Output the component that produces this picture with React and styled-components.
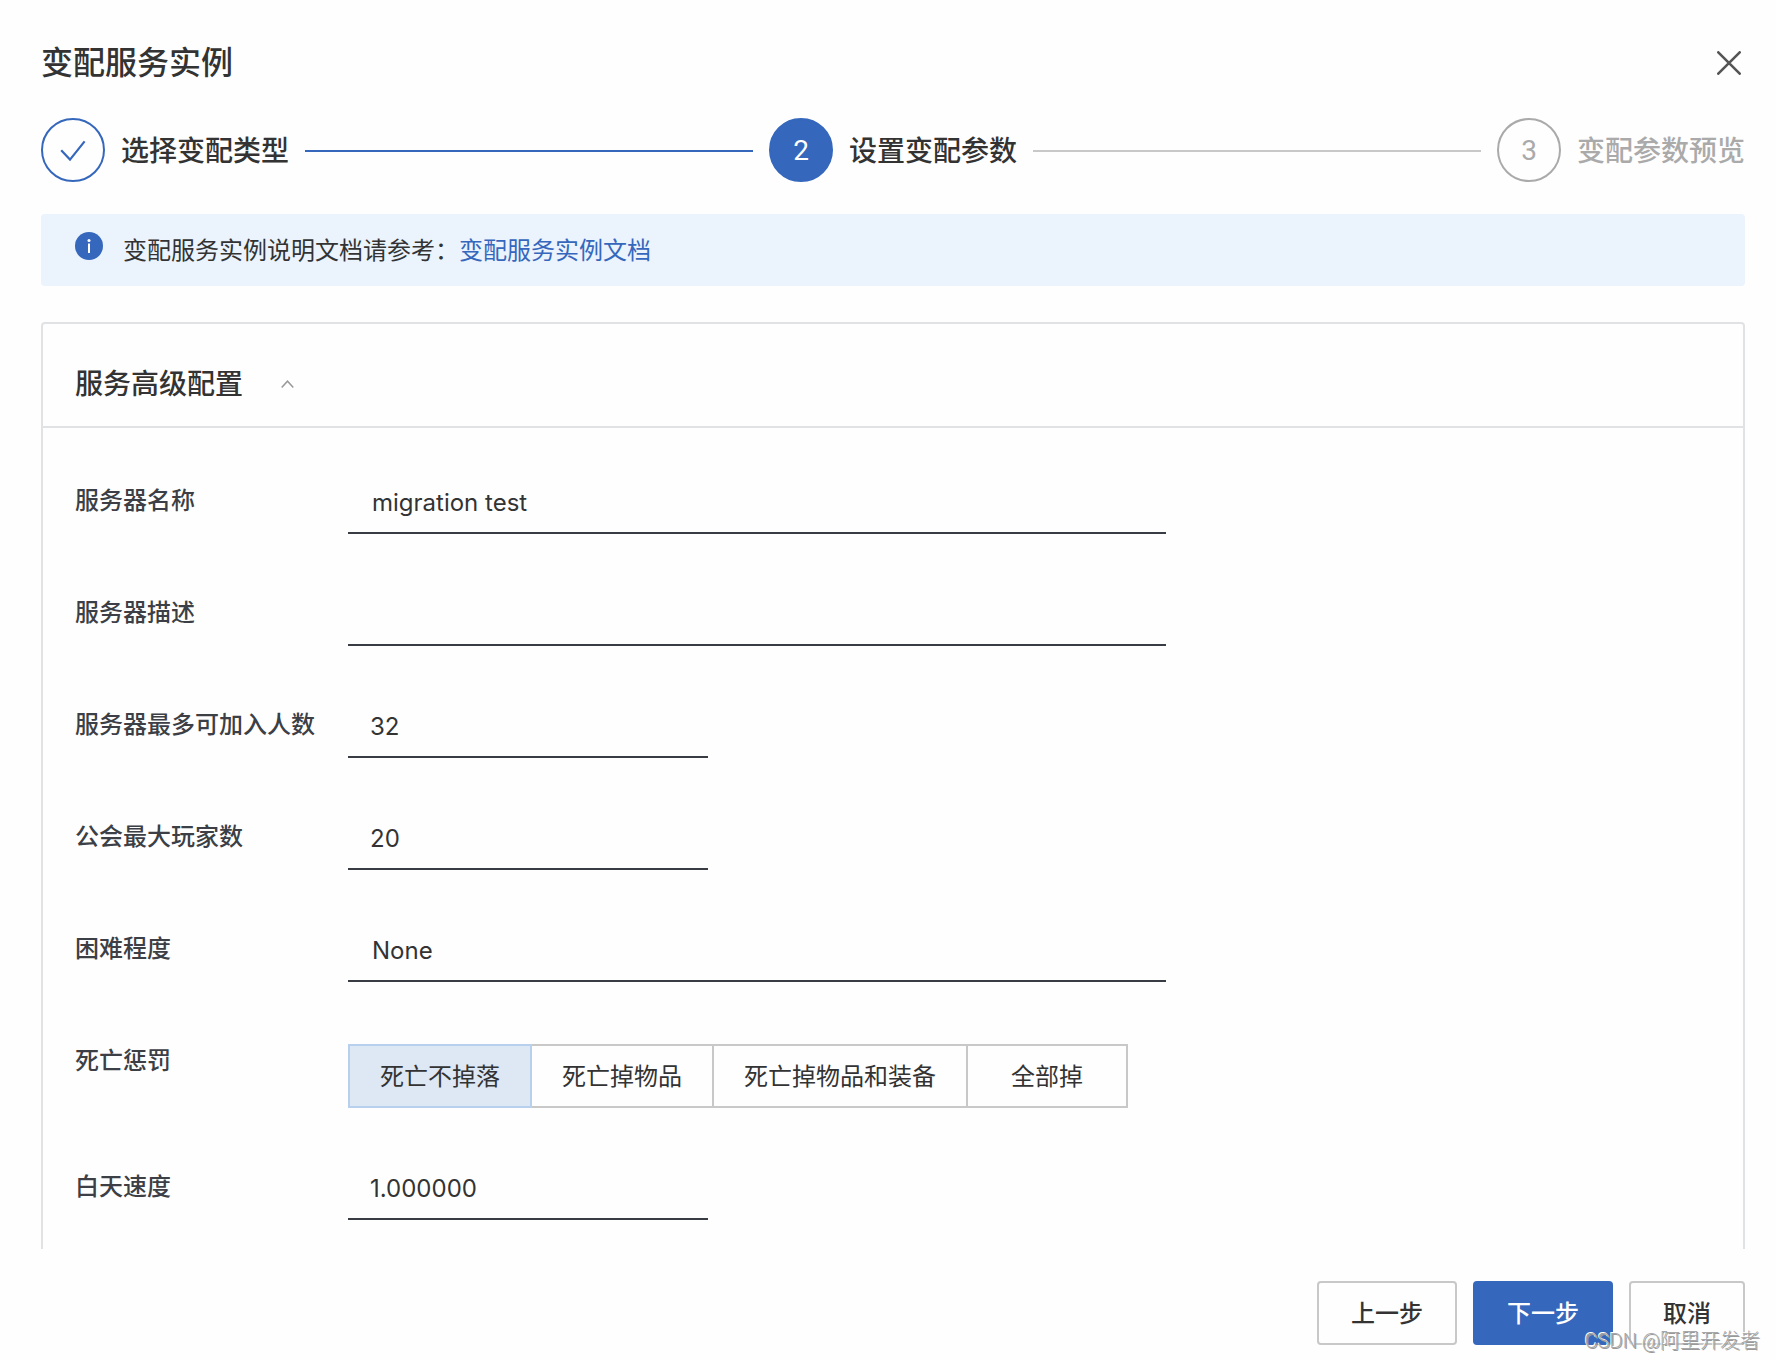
import React, { useState } from "react";
import styled, { createGlobalStyle, css } from "styled-components";

const BLUE = "#3567bc";

const GlobalStyle = createGlobalStyle`
  * {
    box-sizing: border-box;
  }

  body {
    margin: 0;
    background-color: #fefefe;
    color: #333333;
    font-family: Inter, "Noto Sans CJK SC", sans-serif;
    font-size: 24px;
  }

  button,
  input {
    font-family: inherit;
    font-size: inherit;
    color: inherit;
  }
`;

const PageContainer = styled.div`
  position: relative;
  height: 100vh;
  display: flex;
  flex-direction: column;
  padding: 39px 31px 15px 41px;
`;

const TitleContainer = styled.header`
  display: flex;
  align-items: center;
  justify-content: space-between;
  height: 48px;
  margin-bottom: 31px;
`;

const Title = styled.h1`
  margin: 0;
  font-size: 32px;
  line-height: 48px;
  font-weight: 500;
`;

const CloseButton = styled.button`
  display: flex;
  padding: 4px;
  background: none;
  border: none;
  cursor: pointer;
`;

const StepList = styled.ol`
  display: flex;
  align-items: center;
  gap: 16px;
  margin: 0 0 32px;
  padding: 0;
  list-style: none;
`;

const StepItem = styled.li`
  display: flex;
  align-items: center;
  gap: 16px;
  font-size: 28px;
  line-height: 40px;
  font-weight: 500;
  white-space: nowrap;
  color: ${(props) => (props.$state === "wait" ? "#aaaaaa" : "#333333")};
`;

const StepCircle = styled.span`
  display: flex;
  align-items: center;
  justify-content: center;
  width: 64px;
  height: 64px;
  padding-top: 2px;
  border: 2px solid ${(props) => (props.$state === "wait" ? "#aaaaaa" : BLUE)};
  border-radius: 50%;
  background-color: ${(props) => (props.$state === "active" ? BLUE : "transparent")};
  color: ${(props) => (props.$state === "active" ? "#ffffff" : "#aaaaaa")};
  font-family: Roboto, sans-serif;
  font-weight: 400;
`;

const StepText = styled.span`
  padding-top: 2px;
`;

const StepLine = styled.li`
  flex: 1;
  height: 2px;
  margin-top: 2px;
  background-color: ${(props) => (props.$done ? BLUE : "#c8c8c8")};
`;

const Content = styled.main`
  flex: 1;
  min-height: 0;
  overflow-y: auto;
  scrollbar-width: none;
`;

const Notice = styled.div`
  display: flex;
  gap: 20px;
  margin-bottom: 36px;
  padding: 18px 34px 16px;
  border-radius: 4px;
  background-color: #ebf3fd;
  line-height: 38px;

  svg {
    flex: none;
  }
`;

const NoticeLink = styled.a`
  color: ${BLUE};
  text-decoration: none;
`;

const Panel = styled.section`
  border: 2px solid #e1e2e3;
  border-radius: 4px;
`;

const PanelHeader = styled.div`
  display: flex;
  align-items: center;
  gap: 34px;
  padding: 41px 32px 23px;
  border-bottom: 2px solid #e1e2e3;
`;

const PanelTitle = styled.h2`
  margin: 0;
  font-size: 28px;
  line-height: 38px;
  font-weight: 500;
`;

const FoldButton = styled.button`
  display: flex;
  padding: 4px;
  background: none;
  border: none;
  cursor: pointer;
`;

const Form = styled.form`
  display: flex;
  flex-direction: column;
  gap: 48px;
  padding: 42px 32px 48px;
`;

const Row = styled.div`
  display: grid;
  grid-template-columns: 273px 1fr;
`;

const labelText = css`
  color: #3c3f45;
  font-weight: 500;
  line-height: 62px;
`;

const Label = styled.label`
  ${labelText}
`;

const GroupLabel = styled.span`
  ${labelText}
`;

const TextInput = styled.input`
  width: ${(props) => (props.$short ? "360px" : "60%")};
  height: 64px;
  padding: 2px ${(props) => (props.$short ? "22px" : "24px")} 0;
  border: none;
  border-bottom: 2px solid #393c42;
  outline: none;
  background: none;
`;

const RadioGroup = styled.div`
  display: flex;
  margin-top: 14px;
`;

const RadioInput = styled.input`
  position: absolute;
  opacity: 0;
`;

const RadioButton = styled.label`
  position: relative;
  min-width: 162px;
  height: 64px;
  padding: 0 30px;
  border: 2px solid #c8c8c8;
  line-height: 62px;
  text-align: center;
  cursor: pointer;

  & + & {
    margin-left: -2px;
  }

  &:has(input:checked) {
    z-index: 1;
    border-color: #b7d0ed;
    background-color: #dde8f4;
  }
`;

const Footer = styled.footer`
  display: flex;
  justify-content: flex-end;
  gap: 16px;
  padding-top: 32px;
`;

const FooterButton = styled.button`
  height: 64px;
  padding: 2px 32px 0;
  border: 2px solid ${(props) => (props.$primary ? BLUE : "#c8c8c8")};
  border-radius: 4px;
  background-color: ${(props) => (props.$primary ? BLUE : "#fefefe")};
  color: ${(props) => (props.$primary ? "#ffffff" : "#333333")};
  font-weight: 500;
  line-height: 58px;
  cursor: pointer;
`;

const Watermark = styled.span`
  position: absolute;
  right: 16px;
  bottom: 4px;
  color: #a8a8a8;
  font-family: "Liberation Sans Narrow", Roboto, "Noto Sans CJK SC", sans-serif;
  font-size: 20px;
  font-weight: 300;
  line-height: 30px;
  text-shadow: -1px -1px 0 #ffffff, 1px 1px 0 #999999;
  pointer-events: none;
`;

const fields = [
  { id: "serverName", label: "服务器名称", value: "migration test" },
  { id: "serverDesc", label: "服务器描述", value: "" },
  { id: "maxPlayers", label: "服务器最多可加入人数", value: "32", short: true },
  { id: "guildMax", label: "公会最大玩家数", value: "20", short: true },
  { id: "difficulty", label: "困难程度", value: "None" },
];

const penalties = ["死亡不掉落", "死亡掉物品", "死亡掉物品和装备", "全部掉"];

function CloseIcon() {
  return (
    <svg width="24" height="24" viewBox="0 0 24 24" stroke="#555555" strokeWidth="2.6" strokeLinecap="round">
      <path d="M1.3 1.3L22.7 22.7M22.7 1.3L1.3 22.7" />
    </svg>
  );
}

function CheckIcon() {
  return (
    <svg width="26" height="22" viewBox="0 0 26 22" fill="none" stroke={BLUE} strokeWidth="2.2">
      <path d="M1.2 10.2L10 19.6L24.6 1.4" />
    </svg>
  );
}

function InfoIcon() {
  return (
    <svg width="28" height="28" viewBox="0 0 28 28">
      <circle cx="14" cy="14" r="14" fill={BLUE} />
      <circle cx="14" cy="8.5" r="1.5" fill="#ffffff" />
      <path d="M14 11.5V21" stroke="#ffffff" strokeWidth="2" />
    </svg>
  );
}

function FoldIcon() {
  return (
    <svg width="13" height="8" viewBox="0 0 13 8" fill="none" stroke="#999999" strokeWidth="1.5">
      <path d="M0.7 7.4L6.5 1.2L12.3 7.4" />
    </svg>
  );
}

function Field({ id, label, value, short }) {
  return (
    <Row>
      <Label htmlFor={id}>{label}</Label>
      <TextInput id={id} type="text" defaultValue={value} $short={short} />
    </Row>
  );
}

function App() {
  const [penalty, setPenalty] = useState(penalties[0]);

  return (
    <PageContainer>
      <GlobalStyle />
      <TitleContainer>
        <Title>变配服务实例</Title>
        <CloseButton type="button" aria-label="关闭">
          <CloseIcon />
        </CloseButton>
      </TitleContainer>

      <StepList>
        <StepItem $state="done">
          <StepCircle $state="done">
            <CheckIcon />
          </StepCircle>
          <StepText>选择变配类型</StepText>
        </StepItem>
        <StepLine $done aria-hidden="true" />
        <StepItem $state="active" aria-current="step">
          <StepCircle $state="active">2</StepCircle>
          <StepText>设置变配参数</StepText>
        </StepItem>
        <StepLine aria-hidden="true" />
        <StepItem $state="wait">
          <StepCircle $state="wait">3</StepCircle>
          <StepText>变配参数预览</StepText>
        </StepItem>
      </StepList>

      <Content>
        <Notice>
          <InfoIcon />
          <span>
            变配服务实例说明文档请参考：<NoticeLink href="#doc">变配服务实例文档</NoticeLink>
          </span>
        </Notice>

        <Panel>
          <PanelHeader>
            <PanelTitle>服务高级配置</PanelTitle>
            <FoldButton type="button" aria-label="收起">
              <FoldIcon />
            </FoldButton>
          </PanelHeader>
          <Form>
            {fields.map((field) => (
              <Field key={field.id} {...field} />
            ))}
            <Row>
              <GroupLabel id="penaltyLabel">死亡惩罚</GroupLabel>
              <RadioGroup role="radiogroup" aria-labelledby="penaltyLabel">
                {penalties.map((item) => (
                  <RadioButton key={item}>
                    <RadioInput
                      type="radio"
                      name="penalty"
                      checked={penalty === item}
                      onChange={() => setPenalty(item)}
                    />
                    {item}
                  </RadioButton>
                ))}
              </RadioGroup>
            </Row>
            <Field id="daySpeed" label="白天速度" value="1.000000" short />
          </Form>
        </Panel>
      </Content>

      <Footer>
        <FooterButton type="button">上一步</FooterButton>
        <FooterButton type="button" $primary>下一步</FooterButton>
        <FooterButton type="button">取消</FooterButton>
      </Footer>
      <Watermark>CSDN @阿里开发者</Watermark>
    </PageContainer>
  );
}

export default App;
